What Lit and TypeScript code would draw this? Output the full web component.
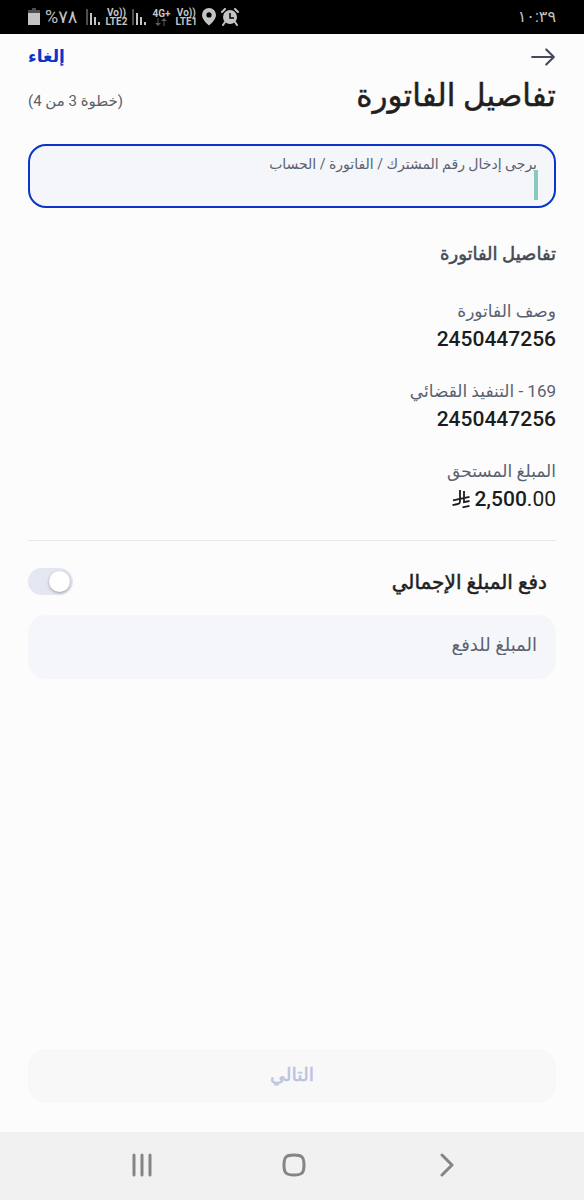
import { LitElement, html, svg, css } from "lit";
import { customElement, property, state } from "lit/decorators.js";

interface BillDetail {
  label: string;
  value: string;
}

const DETAILS: BillDetail[] = [
  { label: "وصف الفاتورة", value: "2450447256" },
  { label: "169 - التنفيذ القضائي", value: "2450447256" },
];

@customElement("status-bar")
class StatusBar extends LitElement {
  static styles = css`
    :host {
      display: flex;
      align-items: center;
      justify-content: space-between;
      height: 34px;
      padding: 0 28px;
      background: #000;
      color: #c4c4c4;
      direction: ltr;
      font: 16px/24px Roboto, "DejaVu Sans", sans-serif;
    }
    .group {
      display: flex;
      align-items: center;
      gap: 5px;
    }
    .charge {
      font-size: 18px;
      padding-right: 3px;
    }
    svg {
      display: block;
      fill: currentColor;
    }
    .carrier {
      display: flex;
      flex-direction: column;
      align-items: center;
      font-size: 10px;
      line-height: 9px;
      font-weight: 700;
    }
    .dim {
      color: #5a5a5a;
    }
  `;

  private bars() {
    return html`<svg width="15" height="18" viewBox="0 0 15 18" aria-hidden="true">
      <rect x="0" y="1" width="2" height="16" opacity=".4" />
      <rect x="4" y="5" width="2" height="12" />
      <rect x="8" y="9" width="2" height="8" />
      <rect x="12" y="14" width="2" height="3" />
    </svg>`;
  }

  render() {
    return html`
      <div class="group">
        <svg width="12" height="18" viewBox="0 0 12 18" aria-hidden="true">
          <path d="M4 0h4v2H4z" opacity=".4" />
          <path d="M0 2h12v4H0z" opacity=".4" />
          <path d="M0 5h12v12H0z" />
        </svg>
        <span class="charge">%٧٨</span>
        ${this.bars()}
        <span class="carrier"><span>Vo))</span><span>LTE2</span></span>
        ${this.bars()}
        <span class="carrier">
          <span>4G+</span>
          <svg class="dim" width="12" height="8" viewBox="0 0 12 8" aria-hidden="true">
            <path d="M2.5 0h1v5H6L3 8 0 5h2.5zM8.500 8h1V3H12L9 0 6 3h2.500z" />
          </svg>
        </span>
        <span class="carrier"><span>Vo))</span><span>LTE1</span></span>
        <svg width="14" height="18" viewBox="0 0 14 18" aria-hidden="true">
          <path fill-rule="evenodd" d="M7 0a7 7 0 0 0-7 7c0 5 7 10.500 7 10.500S14 12 14 7a7 7 0 0 0-7-7zm0 4.300a2.600 2.600 0 1 1 0 5.200 2.600 2.600 0 0 1 0-5.200z" />
        </svg>
        <svg width="18" height="18" viewBox="0 0 18 18" aria-hidden="true">
          <circle cx="9" cy="9" r="7" />
          <g fill="none" stroke="currentColor" stroke-width="2" stroke-linecap="round">
            <path d="M1 4L4 1M17 4L14 1M4 14L2 17M14 14l2 3" />
          </g>
          <path d="M9 5v5h4" fill="none" stroke="#000" stroke-width="1.500" />
        </svg>
      </div>
      <time>١٠:٣٩</time>
    `;
  }
}

@customElement("bill-detail")
class BillDetailItem extends LitElement {
  @property() label = "";

  static styles = css`
    :host {
      display: block;
    }
    .label {
      color: #5a6170;
      font-size: 17px;
      line-height: 28px;
    }
    .value {
      display: flex;
      align-items: center;
      gap: 4px;
      color: #1c1c1e;
      font-size: 21px;
      line-height: 28px;
      font-weight: 500;
    }
  `;

  render() {
    return html`<div class="label">${this.label}</div>
      <div class="value"><slot></slot></div>`;
  }
}

@customElement("app-root")
class AppRoot extends LitElement {
  @state() private account = "";
  @state() private payTotal = false;

  static styles = css`
    :host {
      display: flex;
      flex-direction: column;
      min-height: 100vh;
      background: #fcfcfc;
      color: #1f1f22;
      direction: rtl;
      font-family: Roboto, "DejaVu Sans", sans-serif;
    }
    * {
      box-sizing: border-box;
    }
    button,
    input {
      font: inherit;
      color: inherit;
      border: 0;
      padding: 0;
      margin: 0;
    }
    button {
      background: none;
    }
    svg {
      display: block;
    }
    main {
      flex: 1;
      display: flex;
      flex-direction: column;
      padding: 8px 28px 29px;
    }
    .row {
      display: flex;
      align-items: center;
      justify-content: space-between;
    }
    .toolbar {
      height: 30px;
    }
    .back {
      color: #454b5c;
    }
    .cancel {
      align-self: flex-start;
      color: #0a35c8;
      font-size: 17px;
      font-weight: 700;
      line-height: 28px;
      text-decoration: none;
    }
    .heading {
      align-items: baseline;
    }
    h1 {
      margin: 0;
      font-size: 31px;
      line-height: 48px;
      font-weight: 500;
    }
    .step {
      color: #5a5f69;
      font-size: 15px;
    }
    .field {
      position: relative;
      display: flex;
      flex-direction: column;
      height: 64px;
      border-radius: 18px;
      padding: 6px 17px;
      background: #f4f6fa;
      color: #5a6170;
    }
    .focused {
      margin-top: 24px;
      border: 2px solid #0a35c8;
    }
    .field label {
      font-size: 14px;
      line-height: 24px;
    }
    .field input {
      flex: 1;
      min-height: 0;
      width: 100%;
      background: none;
      outline: none;
      color: #1f1f22;
      font-size: 18px;
    }
    .caret {
      position: absolute;
      inset-inline-start: 16px;
      top: 24px;
      width: 4px;
      height: 30px;
      background: #86c9bf;
    }
    .amount {
      margin-top: 20px;
      padding: 0 19px 6px;
    }
    .amount input::placeholder {
      color: #5a6170;
      opacity: 1;
    }
    h2 {
      margin: 32px 0 29px;
      color: #444955;
      font-size: 18px;
      line-height: 28px;
      font-weight: 500;
    }
    h1,
    h2,
    .total,
    .next {
      -webkit-text-stroke: 0.5px currentColor;
    }
    .details {
      display: flex;
      flex-direction: column;
      gap: 24px;
    }
    .cents {
      font-weight: 400;
    }
    hr {
      width: 100%;
      height: 1px;
      margin: 27px 0;
      border: 0;
      background: #e9e9eb;
    }
    .total {
      height: 27px;
      padding-inline-start: 9px;
      font-size: 20px;
      font-weight: 500;
    }
    .switch {
      appearance: none;
      width: 45px;
      height: 27px;
      border-radius: 14px;
      padding: 3px;
      background: #e4e7f1;
    }
    .switch::before {
      content: "";
      display: block;
      width: 21px;
      height: 21px;
      border-radius: 50%;
      background: #fff;
      box-shadow: 0 1px 3px #0005;
    }
    .switch:checked {
      background: #0a35c8;
    }
    .switch:checked::before {
      margin-inline-start: 18px;
    }
    .next {
      margin-top: auto;
      height: 54px;
      padding-bottom: 4px;
      border-radius: 18px;
      background: #f8f8f8;
      color: #b9c4df;
      font-size: 19px;
      font-weight: 500;
    }
    nav {
      display: flex;
      direction: ltr;
      align-items: center;
      justify-content: center;
      gap: 128px;
      height: 68px;
      padding: 0 0 3px 4px;
      background: #f1f1f1;
      color: #858585;
    }
  `;

  private icon(size: number, body: unknown, width = 2) {
    return html`<svg
      width=${size} height=${size} viewBox="0 0 24 24" fill="none" stroke="currentColor"
      stroke-width=${width} stroke-linecap="round" stroke-linejoin="round" aria-hidden="true"
    >${body}</svg>`;
  }

  render() {
    return html`
      <status-bar></status-bar>
      <main>
        <div class="row toolbar">
          <button class="back" aria-label="رجوع">
            ${this.icon(26, svg`<path d="M2 12h20M15 5l7 7-7 7" />`)}
          </button>
          <a class="cancel" href="#">إلغاء</a>
        </div>
        <div class="row heading">
          <h1>تفاصيل الفاتورة</h1>
          <span class="step">(خطوة 3 من 4)</span>
        </div>

        <div class="field focused">
          <label for="account">يرجى إدخال رقم المشترك / الفاتورة / الحساب</label>
          <input
            id="account"
            .value=${this.account}
            @input=${(e: Event) => (this.account = (e.target as HTMLInputElement).value)}
          />
          <span class="caret"></span>
        </div>

        <h2>تفاصيل الفاتورة</h2>
        <div class="details">
          ${DETAILS.map((d) => html`<bill-detail .label=${d.label}>${d.value}</bill-detail>`)}
          <bill-detail label="المبلغ المستحق">
            <bdi>2,500<span class="cents">.00</span></bdi>
            <svg width="18" height="20" viewBox="0 0 18 20" fill="none" stroke="currentColor" stroke-width="1.800" role="img" aria-label="ريال">
              <path d="M8 1v11.500Q8 14.500 6 15L0.500 16.200M12 2v11.200L17.500 12M1 11.300L17.500 7.800M10.500 18.300L17.500 16.800" />
            </svg>
          </bill-detail>
        </div>

        <hr />
        <div class="row total">
          <label for="total">دفع المبلغ الإجمالي</label>
          <input
            id="total"
            class="switch"
            type="checkbox"
            role="switch"
            .checked=${this.payTotal}
            @change=${(e: Event) => (this.payTotal = (e.target as HTMLInputElement).checked)}
          />
        </div>
        <div class="field amount">
          <input aria-label="المبلغ للدفع" placeholder="المبلغ للدفع" />
        </div>

        <button class="next" disabled>التالي</button>
      </main>
      <nav>
        <button aria-label="التطبيقات الأخيرة">
          ${this.icon(24, svg`<path d="M4 2v20M12 2v20M20 2v20" />`, 3)}
        </button>
        <button aria-label="الشاشة الرئيسية">
          ${this.icon(24, svg`<path d="M12 2c8 0 10 2 10 10s-2 10-10 10S2 20 2 12 4 2 12 2z" />`, 3)}
        </button>
        <button aria-label="رجوع">
          ${this.icon(24, svg`<path d="M8 2l10 10-10 10" />`, 3)}
        </button>
      </nav>
    `;
  }
}
